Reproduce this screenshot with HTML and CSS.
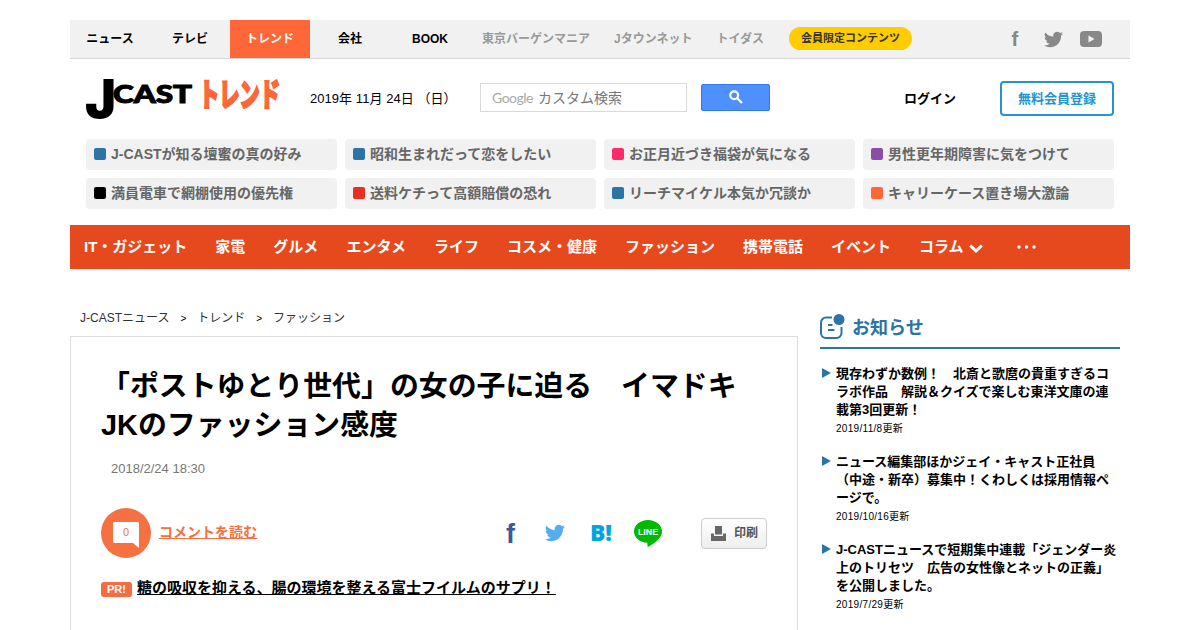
FILE: index.html
```html
<!DOCTYPE html>
<html lang="ja">
<head>
    <meta charset="UTF-8">
    <meta name="viewport" content="width=device-width, initial-scale=1.0">
    <title>「ポストゆとり世代」の女の子に迫る　イマドキJKのファッション感度: J-CAST トレンド</title>
    <link rel="stylesheet" href="styles.css">
</head>
<body>
    <svg class="defs" width="0" height="0">
        <symbol id="twitter" viewBox="0 0 24 24">
            <path d="M23.95 4.57a10 10 0 0 1-2.82.77 4.96 4.96 0 0 0 2.16-2.72c-.95.55-2 .95-3.13 1.18a4.92 4.92 0 0 0-8.38 4.48A13.93 13.93 0 0 1 1.64 3.16a4.92 4.92 0 0 0 1.52 6.57 4.9 4.9 0 0 1-2.23-.61v.06a4.92 4.92 0 0 0 3.95 4.83 5 5 0 0 1-2.21.08 4.94 4.94 0 0 0 4.6 3.42A9.87 9.87 0 0 1 0 19.54a13.99 13.99 0 0 0 7.55 2.21c9.05 0 14-7.5 14-13.98 0-.21 0-.42-.02-.63a9.94 9.94 0 0 0 2.46-2.55z"/>
        </symbol>
    </svg>

    <div class="container">
        <div class="topbar">
            <ul class="tabs">
                <li><a href="#">ニュース</a></li>
                <li><a href="#">テレビ</a></li>
                <li class="active"><a href="#">トレンド</a></li>
                <li><a href="#">会社</a></li>
                <li><a href="#">BOOK</a></li>
            </ul>
            <ul class="sites">
                <li><a href="#">東京バーゲンマニア</a></li>
                <li><a href="#">Jタウンネット</a></li>
                <li><a href="#">トイダス</a></li>
            </ul>
            <a href="#" class="member">会員限定コンテンツ</a>
            <div class="top-sns">
                <svg width="10" height="18"><text x="1.5" y="16" class="sns-f" font-size="20">f</text></svg>
                <svg width="19" height="19"><use href="#twitter"/></svg>
                <svg width="22" height="16" viewBox="0 0 22 16"><rect width="22" height="16" rx="4"/><path d="M8.5 4.5v7l6-3.5z" fill="#f1f1f1"/></svg>
            </div>
        </div>

        <header class="header">
            <svg class="logo" width="194" height="42" viewBox="0 0 194 42">
                <text x="-1" y="41" class="logo-j" font-size="54" textLength="31" lengthAdjust="spacingAndGlyphs">J</text>
                <text x="27" y="26" class="logo-cast" font-size="24" textLength="79" lengthAdjust="spacingAndGlyphs">CAST</text>
                <text transform="translate(113 29) scale(.633 1)" class="logo-trend" font-size="32">トレンド</text>
            </svg>
            <p class="today">2019年 11月 24日 （日）</p>
            <form class="search">
                <div class="search-box"><span class="google">Google</span>カスタム検索</div>
                <button type="button">
                    <svg width="14" height="14" viewBox="0 0 14 14"><circle cx="5.2" cy="5.2" r="3.9"/><path d="M8.2 8.2l4.8 4.8"/></svg>
                </button>
            </form>
            <a href="#" class="login">ログイン</a>
            <a href="#" class="register">無料会員登録</a>
        </header>

        <ul class="topics">
            <li><i class="blue"></i><a href="#">J-CASTが知る壇蜜の真の好み</a></li>
            <li><i class="blue"></i><a href="#">昭和生まれだって恋をしたい</a></li>
            <li><i class="pink"></i><a href="#">お正月近づき福袋が気になる</a></li>
            <li><i class="purple"></i><a href="#">男性更年期障害に気をつけて</a></li>
            <li><i class="black"></i><a href="#">満員電車で網棚使用の優先権</a></li>
            <li><i class="red"></i><a href="#">送料ケチって高額賠償の恐れ</a></li>
            <li><i class="blue"></i><a href="#">リーチマイケル本気か冗談か</a></li>
            <li><i class="orange"></i><a href="#">キャリーケース置き場大激論</a></li>
        </ul>

        <nav class="nav">
            <a href="#">IT・ガジェット</a>
            <a href="#">家電</a>
            <a href="#">グルメ</a>
            <a href="#">エンタメ</a>
            <a href="#">ライフ</a>
            <a href="#">コスメ・健康</a>
            <a href="#">ファッション</a>
            <a href="#">携帯電話</a>
            <a href="#">イベント</a>
            <a href="#">コラム<svg class="arrow" width="14" height="9" viewBox="0 0 14 9"><path d="M1.2 1.5L7 7l5.8-5.5"/></svg></a>
            <a href="#" class="more"><svg width="20" height="4"><circle cx="2" cy="2" r="1.7"/><circle cx="9.5" cy="2" r="1.7"/><circle cx="17" cy="2" r="1.7"/></svg></a>
        </nav>

        <div class="columns">
            <main class="main">
                <ul class="breadcrumb">
                    <li><a href="#">J-CASTニュース</a></li>
                    <li><a href="#">トレンド</a></li>
                    <li><a href="#">ファッション</a></li>
                </ul>
                <article class="article">
                    <h1>「ポストゆとり世代」の女の子に迫る　イマドキJKのファッション感度</h1>
                    <p class="date">2018/2/24 18:30</p>
                    <div class="share">
                        <a href="#" class="comment-icon">
                            <svg width="50" height="50" viewBox="0 0 50 50">
                                <circle cx="25" cy="25" r="25" fill="#f57141"/>
                                <path d="M13.5 14h23a1.5 1.5 0 0 1 1.5 1.5V40l-6-5H13.500a1.500 1.500 0 0 1-1.500-1.500v-18a1.500 1.500 0 0 1 1.500-1.500z" fill="#fff"/>
                                <text x="25" y="28" text-anchor="middle">0</text>
                            </svg>
                        </a>
                        <a href="#" class="comment-link">コメントを読む</a>
                        <div class="share-icons">
                            <svg width="14" height="24"><text x="3" y="22" class="sns-f" font-size="27" fill="#3b5998">f</text></svg>
                            <svg class="share-tw" width="20" height="20"><use href="#twitter"/></svg>
                            <svg width="22" height="20"><text x="0" y="18" class="hatena" font-size="22" textLength="22" lengthAdjust="spacingAndGlyphs">B!</text></svg>
                            <svg width="28" height="27" viewBox="0 0 28 27">
                                <path d="M14 0c7.700 0 14 5 14 11.400 0 6.500-7.500 11.700-14 15.600-.9-.2-.2-3-.8-4.200C5.800 22.400 0 17.600 0 11.400 0 5 6.300 0 14 0z" fill="#00b900"/>
                                <text x="4" y="15" class="line-text" textLength="20" lengthAdjust="spacingAndGlyphs">LINE</text>
                            </svg>
                        </div>
                        <a href="#" class="print">
                            <svg width="15" height="15" viewBox="0 0 15 15"><path d="M4 0h7v8.500H4zM0 7.500h3V10h9V7.500h3V15H0z"/></svg><span>印刷</span>
                        </a>
                    </div>
                    <p class="pr"><span>PR!</span><a href="#">糖の吸収を抑える、腸の環境を整える富士フイルムのサプリ！</a></p>
                </article>
            </main>

            <aside class="side">
                <h2>
                    <svg width="25" height="25" viewBox="0 0 25 25">
                        <path d="M12 3.500H6A5 5 0 0 0 1 8.500v10.500a5 5 0 0 0 5 5h10.500a5 5 0 0 0 5-5V13M8 11h4.500M8 16h6.500"/>
                        <circle cx="19" cy="5.500" r="5.500"/>
                    </svg>お知らせ
                </h2>
                <ul class="news">
                    <li>
                        <a href="#">現存わずか数例！　北斎と歌麿の貴重すぎるコラボ作品　解説＆クイズで楽しむ東洋文庫の連載第3回更新！</a>
                        <span>2019/11/8更新</span>
                    </li>
                    <li>
                        <a href="#">ニュース編集部ほかジェイ・キャスト正社員（中途・新卒）募集中！くわしくは採用情報ページで。</a>
                        <span>2019/10/16更新</span>
                    </li>
                    <li>
                        <a href="#">J-CASTニュースで短期集中連載「ジェンダー炎上のトリセツ　広告の女性像とネットの正義」を公開しました。</a>
                        <span>2019/7/29更新</span>
                    </li>
                </ul>
            </aside>
        </div>
    </div>
</body>
</html>
```
FILE: styles.css
```css
* {
    box-sizing: border-box;
}
body {
    margin: 0;
    color: #000;
    background: #fff;
    font-family: "Liberation Sans", "Noto Sans CJK JP", sans-serif;
    font-size: 13px;
}
ul, p, h1, h2 {
    margin: 0;
    padding: 0;
}
ul {
    list-style: none;
}
a {
    color: inherit;
    text-decoration: none;
}
svg {
    display: block;
    flex: none;
    overflow: visible;
}
.defs {
    height: 0;
}
.container {
    width: 1060px;
    margin: 20px auto 0;
}

/* top bar */
.topbar {
    display: flex;
    align-items: center;
    height: 39px;
    background: #f1f1f1;
    border-bottom: 1px solid #d5d5d5;
    font-size: 12px;
    font-weight: bold;
    line-height: 38px;
}
.tabs {
    display: flex;
}
.tabs li {
    width: 80px;
    text-align: center;
}
.tabs .active {
    background: #ff6638;
    color: #fff;
}
.sites {
    display: flex;
    gap: 24px;
    padding: 0 25px 0 12px;
    color: #999;
}
.member {
    height: 23px;
    margin-bottom: 1px;
    padding: 0 12px;
    border-radius: 12px;
    background: #fc0;
    color: #333;
    font-size: 11px;
    line-height: 23px;
}
.top-sns {
    display: flex;
    align-items: center;
    gap: 17px;
    margin-left: auto;
    padding-right: 28px;
    fill: #888;
}
.top-sns svg:first-child {
    margin-right: 7px;
}
.sns-f {
    font-family: "Liberation Sans", sans-serif;
    font-weight: bold;
}

/* header */
.header {
    display: flex;
    align-items: center;
    height: 80px;
    padding: 0 16px 2px;
}
.logo-j {
    font-family: Inter, sans-serif;
    font-weight: 900;
}
.logo-cast {
    font-family: Lato, sans-serif;
    font-weight: 900;
    stroke: #000;
}
.logo-trend {
    font-family: "Noto Sans CJK JP", sans-serif;
    font-weight: 900;
    fill: #ff6638;
    stroke: #ff6638;
    stroke-width: 2;
}
.today {
    width: 170px;
    margin: -2px 0 0 30px;
    letter-spacing: 0.05px;
}
.search {
    display: flex;
    align-items: center;
    gap: 14px;
    margin-top: -2px;
}
.search-box {
    width: 207px;
    height: 29px;
    padding-left: 11px;
    border: 1px solid #d9d9d9;
    color: #777;
    font-size: 14px;
    line-height: 27px;
}
.google {
    margin-right: 5px;
    color: #aaa;
    font-family: Lato, sans-serif;
    letter-spacing: -0.5px;
}
.search button {
    display: flex;
    align-items: center;
    justify-content: center;
    width: 69px;
    height: 27px;
    padding: 0;
    border: 1px solid #3079ed;
    border-radius: 2px;
    background: #4d90fe;
    fill: none;
    stroke: #fff;
    stroke-width: 2.2;
}
.login {
    margin: -2px 0 0 auto;
    font-weight: bold;
}
.register {
    width: 114px;
    height: 35px;
    margin-left: 44px;
    border: 2px solid #2593cf;
    border-radius: 4px;
    color: #2593cf;
    font-weight: bold;
    line-height: 31px;
    text-align: center;
}

/* topics */
.topics {
    display: grid;
    grid-template-columns: repeat(4, 1fr);
    gap: 8px;
    padding: 0 16px 16px;
}
.topics li {
    display: flex;
    align-items: center;
    gap: 5px;
    height: 31px;
    padding-left: 8px;
    border-radius: 4px;
    background: #f1f1f1;
    color: #666;
    font-size: 14px;
    font-weight: bold;
    line-height: 30px;
    white-space: nowrap;
}
.topics a {
    height: 31px;
}
.topics i {
    width: 12px;
    height: 12px;
    margin-bottom: 1px;
    border-radius: 2px;
}
.blue { background: #2b74a5; }
.pink { background: #ff2a6c; }
.purple { background: #8c4da8; }
.black { background: #000; }
.red { background: #e83020; }
.orange { background: #ff6638; }

/* global nav */
.nav {
    display: flex;
    height: 44px;
    background: #e7491e;
    color: #fff;
    font-size: 15px;
    font-weight: bold;
    line-height: 44px;
}
.nav a {
    display: flex;
    align-items: center;
    padding: 0 14px;
}
.arrow {
    margin: 3px -1px 0 5px;
    fill: none;
    stroke: #fff;
    stroke-width: 3;
}
.more {
    margin-left: 7px;
    fill: #fff;
}

/* contents */
.columns {
    display: flex;
    gap: 22px;
    padding-top: 36px;
}
.main {
    width: 728px;
}
.breadcrumb {
    display: flex;
    height: 31px;
    padding-left: 10px;
    color: #333;
    font-size: 12px;
    line-height: 26px;
}
.breadcrumb li + li::before {
    content: ">";
    margin: 0 11px;
    font-size: 10px;
    color: #000;
}
.article {
    height: 294px;
    padding: 30px 30px 0;
    border: 1px solid #ddd;
    border-bottom: none;
}
h1 {
    font-size: 28.9px;
    line-height: 39px;
}
.date {
    padding: 15px 0 0 10px;
    color: #777;
    line-height: 18px;
}
.share {
    display: flex;
    align-items: center;
    margin-top: 30px;
}
.comment-icon text {
    fill: #f57141;
    font-size: 11px;
}
.comment-link {
    margin: -4px 0 0 8px;
    color: #f57141;
    font-size: 14px;
    font-weight: bold;
    text-decoration: underline;
}
.share-icons {
    display: flex;
    align-items: center;
    gap: 22px;
    margin-left: auto;
}
.share-icons svg:first-child {
    margin-right: 6px;
}
.share-tw {
    margin-right: 3px;
    fill: #55acee;
}
.hatena {
    fill: #00a4de;
    font-family: "Open Sans", sans-serif;
    font-weight: 800;
}
.line-text {
    fill: #fff;
    font-size: 9px;
    font-weight: bold;
}
.print {
    display: flex;
    align-items: center;
    gap: 8px;
    width: 66px;
    height: 31px;
    margin-left: 39px;
    padding-left: 9px;
    border: 1px solid #ccc;
    border-radius: 4px;
    background: linear-gradient(#fff, #eee);
    color: #555;
    fill: #666;
    font-size: 12px;
    font-weight: bold;
    white-space: nowrap;
}
.print span {
    margin-top: -3px;
}
.pr {
    display: flex;
    align-items: center;
    gap: 5px;
    margin-top: 19px;
    font-size: 15px;
    font-weight: bold;
    line-height: 22px;
}
.pr span {
    width: 31px;
    height: 15px;
    margin-top: 3px;
    border-radius: 3px;
    background: #f36c42;
    color: #fff;
    font-size: 11px;
    line-height: 15px;
    text-align: center;
}
.pr a {
    text-decoration: underline;
}

/* sidebar */
.side {
    width: 300px;
    padding-top: 8px;
}
h2 {
    display: flex;
    gap: 7px;
    height: 36px;
    border-bottom: 2px solid #2b74a5;
    color: #2b74a5;
    font-size: 18px;
    line-height: 30px;
}
h2 svg {
    margin-top: 1px;
    fill: none;
    stroke: #2b74a5;
    stroke-width: 2;
}
h2 circle {
    fill: #2b74a5;
    stroke: none;
}
.news {
    padding-top: 16px;
}
.news li {
    position: relative;
    height: 88px;
    padding-left: 16px;
}
.news li::before {
    content: "";
    position: absolute;
    top: 3px;
    left: 2px;
    border-left: 9px solid #2b74a5;
    border-top: 5px solid transparent;
    border-bottom: 5px solid transparent;
}
.news li:last-child {
    height: 74px;
}
.news a {
    display: block;
    width: 282px;
    font-weight: bold;
    line-height: 18px;
}
.news span {
    display: block;
    font-size: 10px;
    letter-spacing: 0.3px;
    line-height: 20px;
}
```
